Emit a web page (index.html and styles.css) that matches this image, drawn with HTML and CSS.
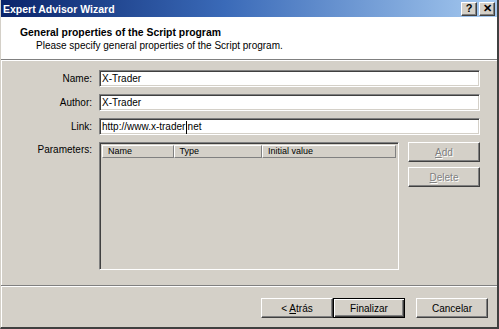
FILE: index.html
```html
<!DOCTYPE html>
<html lang="en">
<head>
  <meta charset="UTF-8">
  <title>Expert Advisor Wizard</title>
  <link rel="stylesheet" href="styles.css">
</head>
<body>
  <div class="window">
    <div class="titlebar">
      <span class="title">Expert Advisor Wizard</span>
      <div class="caption-btns">
        <span class="cap-btn">?</span>
        <span class="cap-btn">&#x2715;</span>
      </div>
    </div>

    <div class="header">
      <div class="header-title">General properties of the Script program</div>
      <div class="header-sub">Please specify general properties of the Script program.</div>
    </div>

    <div class="form">
      <label>Name:</label>
      <div class="input">X-Trader</div>

      <label>Author:</label>
      <div class="input">X-Trader</div>

      <label>Link:</label>
      <div class="input">http://www.x-trader<span class="caret">.</span>net</div>

      <label class="top">Parameters:</label>
      <div class="params">
        <div class="list">
          <div class="list-head">
            <span class="col c1">Name</span>
            <span class="col c2">Type</span>
            <span class="col c3">Initial value</span>
          </div>
        </div>
        <div class="side-btns">
          <button class="btn disabled"><u>A</u>dd</button>
          <button class="btn disabled"><u>D</u>elete</button>
        </div>
      </div>
    </div>

    <div class="footer">
      <button class="btn">&lt; <u>A</u>trás</button>
      <button class="btn default">Finalizar</button>
      <button class="btn cancel">Cancelar</button>
    </div>
  </div>
</body>
</html>
```

FILE: styles.css
```css
* {
  box-sizing: border-box;
}

body {
  margin: 0;
  font-family: 'Liberation Sans', Arial, sans-serif;
  font-size: 10px;
  color: #000;
  background: #d4d0c8;
}

.window {
  width: 499px;
  height: 329px;
  display: flex;
  flex-direction: column;
  background: #d4d0c8;
  border-left: 1px solid #d4d0c8;
  border-right: 2px solid #404040;
  border-bottom: 2px solid #404040;
  box-shadow: inset 1px 0 0 #fff;
}

.titlebar {
  height: 17px;
  display: flex;
  align-items: center;
  justify-content: space-between;
  padding: 0 2px 0 2px;
  background: linear-gradient(to right, #0a246a 0%, #3a6ab8 45%, #a6caf0 100%);
}

.title {
  color: #fff;
  font-weight: bold;
  font-size: 10.5px;
}

.caption-btns {
  display: flex;
  gap: 2px;
}

.cap-btn {
  width: 16px;
  height: 14px;
  display: flex;
  align-items: center;
  justify-content: center;
  background: #d4d0c8;
  border: 1px solid;
  border-color: #fff #404040 #404040 #fff;
  box-shadow: inset -1px -1px 0 #808080;
  font-weight: bold;
  font-size: 11px;
  line-height: 1;
}

.header {
  height: 43px;
  background: #fff;
  padding: 9px 0 0 19px;
  border-bottom: 1px solid #808080;
  box-shadow: 0 1px 0 #fff;
}

.header-title {
  font-weight: bold;
  font-size: 10.4px;
  line-height: 13px;
}

.header-sub {
  padding-left: 16px;
  line-height: 13px;
}

.form {
  flex: 1;
  display: grid;
  grid-template-columns: 91px 381px;
  grid-template-rows: 17px 17px 17px 128px;
  column-gap: 7px;
  row-gap: 7px;
  padding: 10px 0 0 0;
  align-items: center;
}

.form label {
  text-align: right;
}

.form label.top {
  align-self: start;
  padding-top: 2px;
}

.input {
  height: 17px;
  background: #fff;
  border: 1px solid;
  border-color: #808080 #fff #fff #808080;
  box-shadow: inset 1px 1px 0 #404040, inset -1px -1px 0 #d4d0c8;
  padding: 1px 2px;
  line-height: 14px;
  white-space: nowrap;
}

.caret {
  position: relative;
  color: #fff;
}

.caret::after {
  content: "";
  position: absolute;
  left: 1px;
  top: 0;
  width: 1px;
  height: 13px;
  background: #000;
}

.params {
  display: flex;
  gap: 9px;
  align-self: start;
  height: 128px;
}

.list {
  width: 300px;
  height: 128px;
  border: 1px solid;
  border-color: #808080 #fff #fff #808080;
  box-shadow: inset 1px 1px 0 #404040, inset -1px -1px 0 #d4d0c8;
  padding: 2px 2px 0 2px;
}

.list-head {
  display: flex;
  height: 13px;
}

.col {
  height: 13px;
  font-size: 9px;
  line-height: 11px;
  padding-left: 5px;
  border: 1px solid;
  border-color: #fff #808080 #808080 #fff;
}

.c1 { width: 72px; }
.c2 { width: 89px; }
.c3 { width: 135px; }

.side-btns {
  display: flex;
  flex-direction: column;
  gap: 5px;
}

.btn {
  width: 72px;
  height: 20px;
  font-family: inherit;
  font-size: 10px;
  background: #d4d0c8;
  border: 1px solid;
  border-color: #fff #404040 #404040 #fff;
  box-shadow: inset -1px -1px 0 #808080, inset 1px 1px 0 #d4d0c8;
  padding: 0;
  color: #000;
}

.btn.disabled {
  color: #808080;
  text-shadow: 1px 1px 0 #fff;
}

.btn.default {
  border: 1px solid #000;
  box-shadow: inset 1px 1px 0 #fff, inset -1px -1px 0 #404040, inset -2px -2px 0 #808080;
}

.btn.cancel {
  margin-left: 11px;
}

.footer {
  height: 42px;
  display: flex;
  justify-content: flex-end;
  padding: 12px 9px 0 0;
  border-top: 1px solid #808080;
  box-shadow: inset 0 1px 0 #fff;
}
```
